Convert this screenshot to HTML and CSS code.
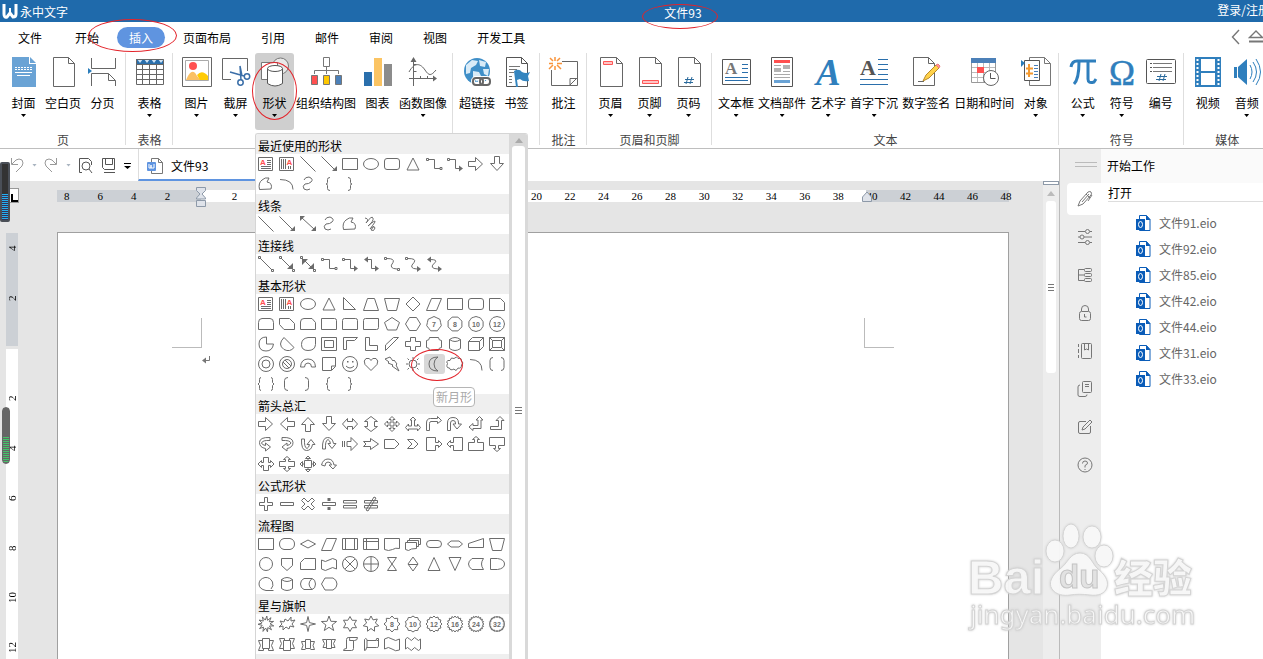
FILE: index.html
```html
<!DOCTYPE html>
<html lang="zh-CN">
<head>
    <meta charset="UTF-8">
    <meta name="viewport" content="width=device-width, initial-scale=1.0">
    <title>文件93 - 永中文字</title>
    <link rel="stylesheet" href="styles.css">
</head>
<body>
    <header class="titlebar">
        <div class="brand">
            <svg width="16" height="18" viewBox="0 0 16 18"><path d="M2 2v10q0 4 3 3l3-4 3 4q3 0 3-3V2" fill="none" stroke="#fff" stroke-width="3"/><path d="M8 6v6" stroke="#fff" stroke-width="2"/></svg>
            <span>永中文字</span>
        </div>
        <h1 class="doc-title">文件93</h1>
        <a class="login" href="#">登录/注册</a>
    </header>

    <nav class="menu">
        <button class="menu-tab menu-file">文件</button>
        <button class="menu-tab">开始</button>
        <button class="menu-tab active"><span>插入</span></button>
        <button class="menu-tab">页面布局</button>
        <button class="menu-tab">引用</button>
        <button class="menu-tab">邮件</button>
        <button class="menu-tab">审阅</button>
        <button class="menu-tab">视图</button>
        <button class="menu-tab">开发工具</button>
        <div class="menu-right">
            <svg width="32" height="16" viewBox="0 0 32 16" fill="none" stroke="#777" stroke-width="1.4"><path d="M8 1L1.500 8 8 15M18.500 8.500L25 2l6.500 6.500z"/><path d="M18 12.500h14" stroke-width="2"/></svg>
        </div>
    </nav>

    <!-- ribbon -->
    <section class="ribbon">
        <div class="group">
            <div class="tools">
                <button class="tool"><svg viewBox="0 0 32 32"><path d="M4 1h17v7h7v23H4z" fill="#6aa3d5"/><path d="M22 1l6 6h-6z" fill="#6aa3d5"/><path d="M7 11.500h17M7 13.500h17" stroke="#fff" stroke-dasharray="2 1"/><path d="M7 16.500h17M9 19.500h13" stroke="#fff"/></svg><span>封面</span><i class="caret"></i></button>
                <button class="tool"><svg viewBox="0 0 32 32" fill="#fff" stroke="#666"><path d="M6.500 1.500h15l6 6v23h-21zM21.500 1.500v6h6"/></svg><span>空白页</span></button>
                <button class="tool"><svg viewBox="0 0 32 32" fill="none" stroke="#666"><path d="M4.500 2v10.500h24V2M4.500 30V17.500h17l7 7V30M21.500 17.500v7h7"/><path d="M1 12l4 3-4 3z" fill="#2b7dbb" stroke="none"/></svg><span>分页</span></button>
            </div>
            <h2 class="group-name">页</h2>
        </div>
        <div class="group">
            <div class="tools">
                <button class="tool"><svg viewBox="0 0 32 32" fill="none" stroke="#666"><path d="M2 3h28v5H2z" fill="#2a6fac" stroke="none"/><path d="M3 3l3 4 3-4zM10 3l3 4 3-4zM17 3l3 4 3-4zM24 3l3 4 3-4z" fill="#cfe3f5" stroke="none"/><path d="M2.500 3.500h27v25h-27zM2.500 8.500h27M2.500 13.500h27M2.500 18.500h27M2.500 23.500h27M8.500 8v20M15.500 8v20M22.500 8v20"/></svg><span>表格</span><i class="caret"></i></button>
            </div>
            <h2 class="group-name">表格</h2>
        </div>
        <div class="group">
            <div class="tools">
                <button class="tool"><svg viewBox="0 0 32 32"><path d="M1.500 1.500h29v29h-29z" fill="#fff" stroke="#666"/><path d="M4.500 4.500h23v20h-23z" fill="#fff" stroke="#aaa"/><circle cx="12" cy="10" r="4" fill="#ff5050"/><path d="M5 24q6-14 11-4l4 4z" fill="#fbc165"/><path d="M16 19q5-6 11 1v4h-8z" fill="#ffcb05"/></svg><span>图片</span><i class="caret"></i></button>
                <button class="tool"><svg viewBox="0 0 32 32" fill="none" stroke="#666"><path d="M11 23.500H2.500v-21h25V15"/><g stroke="#3a6ea8" stroke-width="1.500"><path d="M10 16l14 4M20 10l1 14M20 10l2 10"/><circle cx="27" cy="20.500" r="2.700"/><circle cx="20.500" cy="26.500" r="2.700"/></g></svg><span>截屏</span><i class="caret"></i></button>
                <div class="dropdown-wrap">
                    <button class="tool open"><svg viewBox="0 0 32 32" fill="#fff" stroke="#777"><circle cx="21.500" cy="10" r="8" fill="#e8e8e8"/><path d="M2.500 6.500h16v17h-16z"/><path d="M8.500 12.500v15q7.500 5 15 0v-15" stroke="#555"/><ellipse cx="16" cy="12.500" rx="7.500" ry="3" stroke="#555"/></svg><span>形状</span><i class="caret"></i></button>
                    <div class="shape-menu">
                        <div class="shape-list" id="shape-list"></div>
                        <div class="shape-scroll"><div class="shape-thumb"><i class="grip"></i></div></div>
                    </div>
                </div>
                <button class="tool"><svg viewBox="0 0 32 32" fill="#fff" stroke="#777"><path d="M13.500 1.500h6v9h-6zM16.500 10.500v4M4.500 18v-3.500h24V18M16.500 14v4"/><path d="M1.500 19.500h6v9h-6z" fill="#ff5050"/><path d="M13.500 19.500h6v9h-6z" fill="#ffc800"/><path d="M25.500 19.500h6v9h-6z" fill="#4c80b8"/></svg><span>组织结构图</span></button>
                <button class="tool"><svg viewBox="0 0 32 32"><path d="M2 16h8v14H2z" fill="#2a6fac"/><path d="M12 2h8v28h-8z" fill="#fbc463"/><path d="M22 8h8v22h-8z" fill="#8c8c8c"/></svg><span>图表</span></button>
                <button class="tool"><svg viewBox="0 0 32 32" fill="none" stroke="#666"><path d="M6.500 30V3M2 22.500h26M13.500 20v2M20.500 20v2M6.500 15.500h3M6.500 8.500h3"/><path d="M2 16C8 5 14 8 18 14s6 6 11 0"/><path d="M6.500 1l3 5h-6zM30 22.500l-4-3v6z" fill="#666" stroke="none"/></svg><span>函数图像</span><i class="caret"></i></button>
            </div>
            <h2 class="group-name"></h2>
        </div>
        <div class="group">
            <div class="tools">
                <button class="tool"><svg viewBox="0 0 32 32"><circle cx="16" cy="15" r="13" fill="#3f8fc8"/><path d="M5 9l6-5 6 1-2 4-5 3-1 5-4 1zM18 4l7 2-1 5-5-1zM12 15l6 1 2 4-4 6-4-5zM22 13l6 0-1 7-4-2z" fill="#d9ebf7"/><g fill="none" stroke="#fff" stroke-width="4"><rect x="12" y="22" width="10" height="6" rx="3"/><rect x="19" y="22" width="10" height="6" rx="3"/></g><g fill="none" stroke="#666" stroke-width="2"><rect x="12" y="22" width="10" height="7" rx="3"/><rect x="19" y="22" width="10" height="7" rx="3"/></g></svg><span>超链接</span></button>
                <button class="tool"><svg viewBox="0 0 32 32"><path d="M5.500 1.500h15l6 6v23h-21zM20.500 1.500v6h6" fill="#fff" stroke="#555"/><path d="M8 10.500h11M8 13.500h8M8 16.500h5M8 20.500h3M8 23.500h3M8 26.500h3" stroke="#777"/><path d="M13 15q5-3 8 1 4 2 8 0l-2 4 1 5q-6 1-9-2l-3 1 1 7h-2z" fill="#3485bf"/></svg><span>书签</span></button>
            </div>
            <h2 class="group-name"></h2>
        </div>
        <div class="group">
            <div class="tools">
                <button class="tool"><svg viewBox="0 0 32 32" fill="none" stroke="#666"><path d="M14 5.500h15.500v24h-26V14M22 29.500v-7h7.500M22 29l7-7"/><path d="M7 1v4M7 10v4M1 7.500h4M9 7.500h5M2 2l3 3M9 9l4 4M12 2L9 5M5 9l-4 4" stroke="#f9943b" stroke-width="1.500"/></svg><span>批注</span></button>
            </div>
            <h2 class="group-name">批注</h2>
        </div>
        <div class="group">
            <div class="tools">
                <button class="tool"><svg viewBox="0 0 32 32" fill="#fff" stroke="#666"><path d="M5.500 1.500h16l6 6v23h-22zM21.500 1.500v6h6"/><path d="M8.500 5.500h9v3h-9z" fill="#ffc4c4" stroke="#f55"/></svg><span>页眉</span><i class="caret"></i></button>
                <button class="tool"><svg viewBox="0 0 32 32" fill="#fff" stroke="#666"><path d="M5.500 1.500h16l6 6v23h-22zM21.500 1.500v6h6"/><path d="M8.500 24.500h16v3h-16z" fill="#ffc4c4" stroke="#f55"/></svg><span>页脚</span><i class="caret"></i></button>
                <button class="tool"><svg viewBox="0 0 32 32" fill="#fff" stroke="#666"><path d="M5.500 1.500h16l6 6v23h-22zM21.500 1.500v6h6"/><path d="M15 21l-2 7M19 21l-2 7M12 23.500h9M11 26.500h9" stroke="#2a6a9c"/></svg><span>页码</span><i class="caret"></i></button>
            </div>
            <h2 class="group-name">页眉和页脚</h2>
        </div>
        <div class="group">
            <div class="tools">
                <button class="tool"><svg viewBox="0 0 32 32"><path d="M2.500 3.500h28v25h-28z" fill="#fff" stroke="#555"/><text class="serif-a" x="5" y="18" font-size="17" fill="#777">A</text><path d="M22 8.500h6M22 12.500h6M22 16.500h6M5 21.500h23M5 24.500h23" stroke="#2a6fac"/></svg><span>文本框</span><i class="caret"></i></button>
                <button class="tool"><svg viewBox="0 0 32 32"><path d="M5.500 1.500h21v29h-21z" fill="#fff" stroke="#555"/><path d="M8 4h16v3H8z" fill="#ff5050"/><path d="M8 12h7v4H8zM17 9h7v4h-7z" fill="#b3b3b3"/><path d="M8 9.500h7M17 15.500h7M8 18.500h16M8 21.500h16" stroke="#aaa"/><path d="M8 24h16v3H8z" fill="#6aa3d5"/></svg><span>文档部件</span><i class="caret"></i></button>
                <button class="tool"><svg viewBox="0 0 32 32"><text class="serif-a" x="4" y="29" font-size="37" font-style="italic" fill="#2f7fbd">A</text></svg><span>艺术字</span><i class="caret"></i></button>
                <button class="tool"><svg viewBox="0 0 32 32"><text class="serif-a" x="2" y="19" font-size="22" fill="#555">A</text><path d="M20 3.500h10M20 8.500h10M20 13.500h10M20 18.500h10M2 23.500h28M2 28.500h28" stroke="#2a6fac"/></svg><span>首字下沉</span><i class="caret"></i></button>
                <button class="tool"><svg viewBox="0 0 32 32"><path d="M3.500 1.500h15l6 6v22h-21zM18.500 1.500v6h6" fill="#fff" stroke="#666"/><path d="M8 25.500h6" stroke="#666"/><path d="M13 25l3-6L26 9l3 3-10 10z" fill="#ffd24a" stroke="#b88a2a"/><path d="M26 9l2-1 2 2-1 2z" fill="#f99" stroke="#e77"/></svg><span>数字签名</span></button>
                <button class="tool"><svg viewBox="0 0 32 32"><path d="M3.500 2.500h24v24h-24z" fill="#fff" stroke="#999"/><path d="M3 2h25v5H3z" fill="#4c80b8"/><path d="M9.500 7v19M15.500 7v19M21.500 7v19M4 11.500h23M4 16.500h23M4 21.500h23" stroke="#bbb"/><path d="M9 11h7v6H9z" fill="#ff5050"/><circle cx="23" cy="22" r="7.500" fill="#fff" stroke="#666"/><path d="M22.500 17v5.500h5" fill="none" stroke="#555"/></svg><span>日期和时间</span></button>
                <button class="tool"><svg viewBox="0 0 32 32" fill="#fff" stroke="#777"><path d="M9.500 1.500h15l6 6v22h-21zM24.500 1.500v6h6"/><path d="M4.500 4.500h15v20h-15z" stroke="#555"/><path d="M1 4l4 3-4 4z" fill="#2b7dbb" stroke="none"/><path d="M9 8v13M6 12.500h7M6 17.500h7" stroke="#f59a2f" stroke-width="2"/><path d="M14 9.500h4M14 12.500h4M14 15.500h4M14 18.500h4M14 21.500h4" stroke="#4c80b8"/></svg><span>对象</span><i class="caret"></i></button>
            </div>
            <h2 class="group-name">文本</h2>
        </div>
        <div class="group">
            <div class="tools">
                <button class="tool"><svg viewBox="0 0 32 32" fill="none" stroke="#2f7fbd"><path d="M4 11q1-6 6-6h19" stroke-width="3"/><path d="M12 6q0 17-5 22" stroke-width="3"/><path d="M21 6v17q0 5 6 3l2-3" stroke-width="3"/></svg><span>公式</span><i class="caret"></i></button>
                <button class="tool"><svg viewBox="0 0 32 32"><text x="3" y="29" font-size="35" font-family="Liberation Serif, serif" fill="#2f7fbd" stroke="#2f7fbd" stroke-width=".5">Ω</text></svg><span>符号</span><i class="caret"></i></button>
                <button class="tool"><svg viewBox="0 0 32 32"><rect x="1.500" y="3.500" width="29" height="24" rx="1" fill="#fff" stroke="#555"/><path d="M5 7.500h2M5 11.500h2M5 15.500h2" stroke="#555"/><path d="M8 7.500h19M8 11.500h19M8 15.500h19" stroke="#777"/><path d="M16 18l-2 7M20 18l-2 7M12 20.500h10M11 23.500h10" stroke="#2a6a9c"/></svg><span>编号</span></button>
            </div>
            <h2 class="group-name">符号</h2>
        </div>
        <div class="group">
            <div class="tools">
                <button class="tool"><svg viewBox="0 0 32 32"><path d="M3 1h26v30H3z" fill="#2f7fbd"/><path d="M9 3h14v12H9zM9 17h14v12H9z" fill="#fff"/><path d="M5.500 3v27M26.500 3v27" stroke="#fff" stroke-width="2" stroke-dasharray="2 2"/></svg><span>视频</span></button>
                <button class="tool"><svg viewBox="0 0 32 32"><path d="M3 11h3v11H3zM7 11l9-8v26l-9-8z" fill="#2f7fbd"/><path d="M19 9q4 7 0 14M22 6q7 10 0 20M25 3q9 13 0 26" fill="none" stroke="#2f7fbd"/></svg><span>音频</span><i class="caret"></i></button>
            </div>
            <h2 class="group-name">媒体</h2>
        </div>
    </section>

    <div class="workspace">
        <main class="editor">
            <div class="quickbar">
                <button class="quick"><svg width="14" height="18" viewBox="0 0 14 18" fill="none" stroke="#999"><path d="M1.500 2v6.500H8M2 8l4-4q3-2 6 0 2 3 0 6l-6 6"/></svg></button>
                <i class="caret pale"></i>
                <button class="quick"><svg width="14" height="18" viewBox="0 0 14 18" fill="none" stroke="#999"><path d="M12.500 2v6.500H6M12 8L8 4Q5 2 2 4 0 7 2 10l6 6"/></svg></button>
                <i class="caret pale"></i>
                <button class="quick"><svg width="15" height="18" viewBox="0 0 15 18" fill="none" stroke="#555"><path d="M4 16.500H1.500v-14h9l3 3V9"/><circle cx="8" cy="10" r="4"/><path d="M11 13l3 4"/></svg></button>
                <button class="quick save"><svg width="15" height="18" viewBox="0 0 15 18" fill="none" stroke="#555"><path d="M1.500 2.500h12v11h-10l-2-2zM4.500 2.500v6h7v-6M3 16.500h11"/></svg></button>
                <i class="caret more"></i>
                <div class="doc-tab">
                    <svg width="16" height="18" viewBox="0 0 16 18"><path d="M4.500 1.500h7l4 4v11h-11zM11.500 1.500v4h4" fill="#fff" stroke="#777"/><rect x="0" y="5" width="9" height="9" rx="1" fill="#5f94e0"/><path d="M2 7v4h2V8v3h3V7" stroke="#fff" fill="none"/></svg>
                    <span>文件93</span>
                </div>
            </div>
            <div class="canvas">
                <div class="vruler-col">
                    <span class="tab-stop"></span>
                    <div class="vruler" id="vruler"></div>
                </div>
                <div class="sheet-col">
                    <div class="hruler" id="hruler"></div>
                    <div class="sheet">
                        <i class="crop crop-left"></i>
                        <svg class="para" width="8" height="8" viewBox="0 0 8 8"><path d="M7.500 0v4.500H1" fill="none" stroke="#777"/><path d="M0 4.500l4-3v6z" fill="#777"/></svg>
                        <i class="crop crop-right"></i>
                    </div>
                </div>
                <div class="vscroll">
                    <i class="split"></i>
                    <i class="up"></i>
                    <div class="thumb"><i class="grip"></i></div>
                </div>
            </div>
        </main>
        <aside class="side">
            <div class="side-tabs">
                <i class="side-handle"></i>
                <button class="side-tab active"><svg viewBox="0 0 18 18"><path d="M2 16l2-5L12 2q2-1 3 0 1 2 0 3L7 14zM10 4l4 4M6 12l7-8M16 5l-4 6"/></svg></button>
                <button class="side-tab"><svg viewBox="0 0 18 18"><path d="M2 3.500h7M14 3.500h2M2 9h2M8 9h8M2 14.500h7M14 14.500h2"/><circle cx="11.500" cy="3.500" r="2"/><circle cx="6" cy="9" r="2"/><circle cx="11.500" cy="14.500" r="2"/></svg></button>
                <button class="side-tab"><svg viewBox="0 0 18 18"><path d="M8 3.500H2.500v11H8M2.500 9H8"/><rect x="8.500" y="2.500" width="7" height="3" rx="1"/><rect x="8.500" y="7.500" width="7" height="3" rx="1"/><rect x="8.500" y="12.500" width="7" height="3" rx="1"/></svg></button>
                <button class="side-tab"><svg viewBox="0 0 18 18"><rect x="3.500" y="7.500" width="11" height="9" rx="2"/><path d="M5.500 7V5q0-3.500 3.500-3.500T12.500 5v2M8.500 10v3h2"/></svg></button>
                <button class="side-tab"><svg viewBox="0 0 18 18"><path d="M2.500 2v3M2.500 7v4M2.500 13v3"/><rect x="5.500" y="1.500" width="10" height="15" rx="1"/><path d="M8.500 2v6l2-1 2 1V2"/></svg></button>
                <button class="side-tab"><svg viewBox="0 0 18 18"><rect x="6.500" y="1.500" width="9" height="11" rx="1"/><path d="M9 4.500h4M9 6.500h4M4 5q-2 0-2 2v8q0 1.500 2 1.500h5q2 0 2-2"/></svg></button>
                <button class="side-tab"><svg viewBox="0 0 18 18"><path d="M10 3.500H4q-1.500 0-1.500 1.500v9q0 1.500 1.500 1.500h9q1.500 0 1.500-1.500V8M6 12l1-3 7-7 2 2-7 7z"/></svg></button>
                <button class="side-tab"><svg viewBox="0 0 18 18"><circle cx="9" cy="9" r="7"/><path d="M6.500 7.500q0-2.500 2.500-2.500t2.500 2q0 1.500-2.500 2.500v2M9 13v1"/></svg></button>
            </div>
            <div class="side-panel">
                <h2 class="side-title">开始工作</h2>
                <h3 class="side-sub">打开</h3>
                <ul class="files" id="files"></ul>
            </div>
        </aside>
    </div>

    <div class="tooltip">新月形</div>

    <!-- floating desktop meters -->
    <div class="meter meter-top"></div>
    <div class="meter meter-bottom"></div>

    <!-- red marks -->
    <i class="mark mark-insert"></i>
    <i class="mark mark-title"></i>
    <i class="mark mark-shape"></i>
    <i class="mark mark-moon"></i>

    <svg class="watermark" width="250" height="130" viewBox="0 0 250 130">
        <text x="8" y="74" font-size="49" font-weight="bold" class="wm-latin">Bai</text>
        <ellipse cx="95" cy="31" rx="9" ry="11"/>
        <ellipse cx="111" cy="16" rx="8" ry="12"/>
        <ellipse cx="132" cy="17" rx="9" ry="11"/>
        <ellipse cx="144" cy="36" rx="9" ry="11"/>
        <path d="M120 33c-10 0-12 10-20 16s-12 14-8 20 12 7 18 6 12-1 20 0 15-1 17-8-3-13-9-18-8-16-18-16z"/>
        <text x="99" y="68" font-size="33" font-weight="bold" class="wm-latin wm-du">du</text>
        <text x="154" y="72" font-size="39" font-weight="900" class="wm-cjk">经验</text>
        <text x="10" y="104" font-size="26" class="wm-url">jingyan.baidu.com</text>
    </svg>

    <script src="shapes.js"></script>
</body>
</html>
```
FILE: styles.css
```css
* {
    box-sizing: border-box;
}
body {
    margin: 0;
    height: 100vh;
    display: flex;
    flex-direction: column;
    overflow: hidden;
    position: relative;
    background: #fff;
    color: #000;
    font-family: "Noto Sans CJK SC", sans-serif;
    font-size: 12px;
    line-height: 16px;
}
h1, h2, h3, ul {
    margin: 0;
    padding: 0;
    font-size: 12px;
    font-weight: normal;
    list-style: none;
}
button {
    border: none;
    background: none;
    padding: 0;
    color: inherit;
    font: inherit;
    cursor: pointer;
}
svg, i {
    display: block;
    flex: none;
}

/* title bar */
.titlebar {
    display: grid;
    grid-template-columns: 52.6% 1fr auto;
    align-items: center;
    height: 22px;
    flex: none;
    background: #1f6aab;
    color: #fff;
}
.brand {
    display: flex;
    align-items: center;
    gap: 2px;
    padding-left: 2px;
}
.brand span {
    padding-top: 2px;
}
.doc-title {
    padding-top: 3px;
}
.login {
    color: #fff;
    text-decoration: none;
    white-space: nowrap;
    margin-right: -7px;
    padding-bottom: 2px;
}

/* menu tabs */
.menu {
    display: flex;
    align-items: center;
    height: 30px;
    flex: none;
    padding-left: 3px;
}
.menu-tab {
    padding: 1px 15px 0;
    height: 30px;
    white-space: nowrap;
}
.menu-file {
    margin-right: 3px;
}
.menu-tab.active {
    padding: 0 3px;
}
.menu-tab.active span {
    display: block;
    padding: 3px 12px 2px;
    border-radius: 11px;
    background: #5f94e0;
    color: #fff;
}
.menu-right {
    margin-left: auto;
}

/* ribbon */
.ribbon {
    display: flex;
    height: 97px;
    flex: none;
    border-bottom: 1px solid #bebebe;
    position: relative;
    z-index: 2;
}
.group {
    flex: none;
    padding: 0 3px 0 4px;
    position: relative;
    border-right: 1px solid #dedede;
    height: 92px;
    margin-top: 1px;
    display: flex;
    flex-direction: column;
    justify-content: space-between;
}
.tools {
    display: flex;
}
.tool {
    display: flex;
    flex-direction: column;
    align-items: center;
    min-width: 39px;
    height: 77px;
    padding: 3px 2px 0;
    border-radius: 3px;
    white-space: nowrap;
}
.tool svg {
    width: 32px;
    height: 32px;
    margin-bottom: 7px;
    overflow: visible;
}
.tool.open {
    background: #cfcfcf;
}
.caret {
    width: 5px;
    height: 3px;
    margin-top: 3px;
    background: #000;
    clip-path: polygon(0 0, 100% 0, 50% 100%);
}
.group-name {
    text-align: center;
    color: #444;
    height: 13px;
}
.serif-a {
    font-family: "Liberation Serif", serif;
    font-weight: bold;
}

/* shapes drop-down */
.dropdown-wrap {
    position: relative;
}
.shape-menu {
    position: absolute;
    top: 80px;
    left: 0;
    display: flex;
    width: 273px;
    height: calc(100vh - 133px);
    overflow: hidden;
    background: #fff;
    border-top: 1px solid #d5d5d5;
    border-left: 1px solid #d5d5d5;
    border-radius: 3px 3px 0 0;
}
.shape-list {
    width: 253px;
    flex: none;
}
.shape-head {
    height: 20px;
    padding: 4px 2px 0;
    background: #efefef;
}
.shape-grid {
    display: grid;
    grid-template-columns: repeat(12, 21px);
}
.shape {
    width: 21px;
    height: 20px;
    border-radius: 3px;
}
.shape svg {
    fill: none;
    stroke: #6c6c6c;
}
.shape text {
    fill: #6c6c6c;
    stroke: none;
    font-family: "Liberation Sans", sans-serif;
    font-weight: bold;
    font-size: 7px;
    text-anchor: middle;
}
.shape .red {
    fill: #ff5050;
    font-size: 8px;
}
.shape .solid {
    fill: #6c6c6c;
    stroke: none;
}
.shape.selected {
    background: #d8d8d8;
}
.shape-scroll {
    flex: 1;
    padding: 12px 3px 0;
    background: #d9d9d9;
    position: relative;
}
.shape-scroll::before {
    content: "";
    position: absolute;
    top: 4px;
    left: 6px;
    width: 8px;
    height: 5px;
    background: #aaa;
    clip-path: polygon(50% 0, 100% 100%, 0 100%);
}
.shape-thumb {
    height: 100%;
    padding-top: 16px;
    background: #fff;
    border-radius: 3px 3px 0 0;
    display: flex;
    justify-content: center;
    align-items: center;
}
.grip {
    width: 7px;
    height: 7px;
    border-top: 1px solid #777;
    border-bottom: 1px solid #777;
    background: linear-gradient(#777, #777) center / 7px 1px no-repeat;
}
.tooltip {
    position: absolute;
    z-index: 3;
    left: 433px;
    top: 387px;
    padding: 1px 2px;
    border: 1px solid #b5b5b5;
    border-radius: 4px;
    background: #fff;
    color: #aaa;
}

/* editor */
.workspace {
    flex: 1;
    display: flex;
    min-height: 0;
}
.editor {
    flex: 1;
    display: flex;
    flex-direction: column;
    min-width: 0;
}
.quickbar {
    display: flex;
    align-items: center;
    height: 32px;
    flex: none;
    padding-left: 10px;
}
.quickbar .caret {
    margin: 0 7px 0 8px;
}
.quickbar .caret.pale {
    background: #a9b4c0;
}
.quickbar .save {
    margin-left: 8px;
}
.quickbar .caret.more {
    width: 7px;
    height: 6px;
    margin: 2px 7px 0 8px;
    clip-path: polygon(0 0, 100% 0, 100% 17%, 0 17%, 0 50%, 100% 50%, 50% 100%, 0 50%);
}
.doc-tab {
    display: flex;
    align-items: center;
    gap: 8px;
    width: 200px;
    height: 32px;
    padding: 3px 8px 0;
    border-left: 1px solid #ddd;
    border-bottom: 2px solid #5f94e0;
}
.canvas {
    flex: 1;
    display: flex;
    min-height: 0;
    background: #e5e5e5;
}
.vruler-col {
    width: 57px;
    flex: none;
    display: flex;
    flex-direction: column;
}
.tab-stop {
    width: 13px;
    height: 15px;
    margin: 7px 0 0 6px;
    border: 1px solid #999;
    background: #fff;
    flex: none;
}
.tab-stop::after {
    content: "";
    display: block;
    width: 5px;
    height: 6px;
    margin: 5px 0 0 4px;
    border-left: 2px solid #000;
    border-bottom: 2px solid #000;
}
.vruler {
    width: 12px;
    flex: 1;
    min-height: 0;
    margin: 30px 0 0 6px;
    background: linear-gradient(#ccd0d5 113px, #e5e5e5 113px, #e5e5e5 116px, #fff 116px);
    overflow: hidden;
    display: flex;
    flex-direction: column;
    align-items: center;
    font-family: "Liberation Serif", serif;
    font-size: 11px;
}
.vruler span {
    height: 50px;
    flex: none;
    writing-mode: vertical-rl;
    transform: rotate(180deg);
    text-align: center;
    line-height: 12px;
}
.vruler span:first-child {
    margin-top: -10px;
}
.sheet-col {
    flex: 1;
    display: flex;
    flex-direction: column;
    min-width: 0;
}
.hruler {
    display: flex;
    height: 12px;
    margin: 9px 34px 0 0;
    flex: none;
    position: relative;
    background: linear-gradient(90deg, #ccd0d5 144px, #fff 144px, #fff calc(100% - 143px), #ccd0d5 calc(100% - 143px));
    font-family: "Liberation Serif", serif;
    font-size: 11px;
    line-height: 12px;
}
.hruler-nums {
    flex: 1;
    display: flex;
    margin: 0 -14px 0 -7px;
}
.hruler-nums span {
    flex: 1 1 0;
    text-align: center;
}
.indent {
    position: absolute;
    top: -3px;
    left: 139px;
}
.indent-right {
    top: 1px;
    left: auto;
    right: 137px;
}
.sheet {
    flex: 1;
    margin: 30px 34px 0 0;
    border: 1px solid #a0a0a0;
    border-bottom: none;
    background: #fff;
    display: grid;
    grid-template-columns: 144px 1fr 144px;
    align-content: start;
    padding-top: 85px;
}
.crop {
    width: 30px;
    height: 30px;
    border-bottom: 1px solid #bbb;
}
.crop-left {
    border-right: 1px solid #bbb;
    justify-self: end;
}
.crop-right {
    border-left: 1px solid #bbb;
}
.para {
    margin: 38px 0 0;
}
.vscroll {
    width: 16px;
    flex: none;
    background: #ededed;
    display: flex;
    flex-direction: column;
    align-items: center;
}
.split {
    width: 16px;
    height: 4px;
    border: 1px solid #8d99a8;
    background: #fff;
}
.up {
    width: 8px;
    height: 5px;
    margin: 6px 0 5px;
    background: #bbb;
    clip-path: polygon(50% 0, 100% 100%, 0 100%);
}
.thumb {
    width: 10px;
    height: 172px;
    border-radius: 3px;
    background: #fff;
    display: flex;
    justify-content: center;
    align-items: center;
}
.thumb .grip {
    width: 6px;
}

/* side panel */
.side {
    display: flex;
    width: 204px;
    flex: none;
    border-left: 1px solid #bbb;
}
.side-tabs {
    width: 41px;
    flex: none;
    padding-left: 7px;
    background: #ededed;
}
.side-handle {
    width: 22px;
    height: 5px;
    margin: 13px 0 16px 8px;
    border-top: 1px solid #bbb;
    border-bottom: 1px solid #bbb;
}
.side-tab {
    display: flex;
    justify-content: center;
    align-items: center;
    width: 34px;
    height: 32px;
    margin-bottom: 6px;
    padding-left: 2px;
    border-radius: 4px 0 0 4px;
}
.side-tab.active {
    background: #fff;
}
.side-tab svg {
    width: 18px;
    height: 18px;
    fill: none;
    stroke: #777;
}
.side-panel {
    flex: 1;
}
.side-title {
    height: 34px;
    padding: 9px 6px 0;
    background: #fafafa;
}
.side-sub {
    height: 19px;
    margin-left: 7px;
    padding-top: 2px;
    border-bottom: 1px solid #ddd;
}
.files {
    padding: 8px 0 0 35px;
}
.files a {
    display: flex;
    align-items: center;
    gap: 8px;
    height: 26px;
    color: #666;
    text-decoration: none;
}

/* overlays */
.meter {
    position: absolute;
    z-index: 3;
    left: 0;
    width: 10px;
}
.meter-top {
    top: 162px;
    height: 60px;
    border: 2px solid #4a4f57;
    border-radius: 2px;
    background: linear-gradient(#333 30px, transparent 30px), repeating-linear-gradient(#25b0f0 0 1px, #335 1px 2px);
}
.meter-bottom {
    left: 2px;
    top: 407px;
    width: 8px;
    height: 57px;
    border-radius: 4px;
    border: 1px solid #666;
    background: linear-gradient(#666 29px, transparent 29px), repeating-linear-gradient(#666 0 1px, #45c46a 1px 2px);
}
.mark {
    position: absolute;
    z-index: 4;
    border: 1px solid #e3242b;
    border-radius: 50%;
}
.mark-insert {
    left: 88px;
    top: 19px;
    width: 89px;
    height: 33px;
}
.mark-title {
    left: 642px;
    top: 4px;
    width: 76px;
    height: 25px;
}
.mark-shape {
    left: 252px;
    top: 62px;
    width: 45px;
    height: 58px;
}
.mark-moon {
    left: 411px;
    top: 349px;
    width: 52px;
    height: 32px;
}
.watermark {
    position: absolute;
    z-index: 5;
    left: 960px;
    top: 520px;
    fill: #fff;
    fill-opacity: 0.8;
    stroke: #d4d4d4;
    filter: drop-shadow(0 0 1px #ccc);
}
.wm-latin {
    font-family: "Liberation Sans", sans-serif;
}
.wm-du {
    fill: #ddd;
    stroke: #c4c4c4;
}
.wm-cjk {
    font-family: "Noto Sans CJK SC", sans-serif;
}
.wm-url {
    font-family: "Noto Sans", sans-serif;
}
```
FILE: shapes.js
```javascript
// helpers, every icon is drawn in a 21x20 cell around (10, 10)
function poly(n, r, turn) {
    return star(n, r, r * Math.cos(Math.PI / n), turn);
}
function star(n, R, r, turn) {
    let d = '';
    for (let i = 0; i < n * 2; i++) {
        let a = Math.PI * i / n - Math.PI / 2 + (turn || 0);
        let q = i % 2 ? r : R;
        d += (i ? 'L' : 'M') + (10 + q * Math.cos(a)).toFixed(1) + ' ' + (10 + q * Math.sin(a)).toFixed(1);
    }
    return d + 'z';
}
function circle(r, x, y) {
    x = x || 10;
    y = y || 10;
    return `M${x - r} ${y}a${r} ${r} 0 1 0 ${2 * r} 0a${r} ${r} 0 1 0 ${-2 * r} 0z`;
}
function num(d, t) {
    return `<path d="${d}"/><text x="10" y="12.500">${t}</text>`;
}
const HEAD = 'M18 17v-5l-5 5z';
const HEAD2 = 'M2 2v5l5-5z';

// outline path, optional filled path after "|", or raw svg
const shapes = {
    textH: '<path d="M2.500 3.500h14v13h-14zM11 6.500h4M11 8.500h4M11 10.500h4M5 12.500h10M5 14.500h10" /><text class="red" x="7" y="11">A</text>',
    textV: '<path d="M2.500 3.500h14v13h-14zM4.500 5v10M6.500 5v10M8.500 5v10M11.500 12v3M13.500 12v3" /><text class="red" x="12.500" y="11">A</text>',
    line: 'M2.500 2.500l15 15',
    arrow: 'M2.500 2.500l13 13|' + HEAD,
    doubleArrow: 'M4 4l12 11|' + HEAD + HEAD2,
    rect: 'M2.500 4.500h15v11h-15z',
    oval: 'M2.500 10a7.500 5.500 0 1 0 15 0a7.500 5.500 0 1 0-15 0z',
    roundRect: 'M5 4.500h10q2.500 0 2.500 2.500v6q0 2.500-2.500 2.500H5q-2.500 0-2.500-2.500V7q0-2.500 2.500-2.500z',
    triangle: 'M10 4l6 12H4z',
    elbow: 'M5 5.500h5.500v9H16M2.500 4.500h2v2h-2zM16 13.500h2v2h-2z',
    elbowArrow: 'M5 5.500h5.500v9H15M2.500 4.500h2v2h-2z|M18 14.500l-4-3v6z',
    elbowDouble: 'M5 5.500h5.500v9H15|M3 5.500l4-3v6zM18 14.500l-4-3v6z',
    right: 'M2.500 7.500h7v-4l7 6.500-7 6.500v-4h-7z',
    left: 'M17.500 7.500h-7v-4L3.500 10l7 6.500v-4h7z',
    up: 'M7.500 17.500v-7h-4L10 3.500l6.500 7h-4v7z',
    down: 'M7.500 2.500v7h-4l6.500 7 6.500-7h-4v-7z',
    freeform: 'M3.500 15.500Q2 9 6 6q3-3 7-2l-2 4q6 1 4 7z',
    arc: 'M3 5.500q13 0 13 10',
    curve: 'M6 6q1-3 5-3 5 2 2 5-2 2-6 2-3 2-1 5 3 2 6 0',
    scribble: 'M4 4q5 1 1 5 6-8 7-5 1 3-5 8 8-7 7-4-2 3-5 7 4-4 5-1-1 4-4 2l3-4',
    braceL: 'M11 3.500q-2.500 0-2.500 2v3q0 1.500-1.500 1.500 1.500 0 1.500 1.500v3q0 2 2.500 2',
    braceR: 'M8 3.500q2.500 0 2.500 2v3q0 1.500 1.500 1.500-1.500 0-1.500 1.500v3q0 2-2.500 2',
    conn: 'M4 4l12 12M2.500 2.500h2v2h-2zM15.500 15.500h2v2h-2z',
    connArrow: 'M4 4l10 10M2.500 2.500h2v2h-2zM15.500 15.500h2v2h-2z|M16 15v-6l-6 6z',
    connDouble: 'M4 4l12 12M2.500 2.500h2v2h-2zM15.500 15.500h2v2h-2z|M16 15v-6l-6 6zM4 5v6l6-6z',
    curved: 'M5 4.500q8 0 6 4-5 6 4 6.500M2.500 3.500h2v2h-2zM15.500 14.500h2v2h-2z',
    curvedArrow: 'M5 4.500q9 0 6 4-6 6 3 6.500M2.500 3.500h2v2h-2z|M18 15l-4-3v6z',
    curvedDouble: 'M6 5.500q8 0 5 3-7 6 3 6.500|M3 5.500l4-3v6zM18 15l-4-3v6z',
    rightTriangle: 'M3.500 3.500v12h12z',
    trapezoid: 'M6.500 4.500h7l4 12h-15z',
    trapInv: 'M2.500 4.500h15l-3 12h-9z',
    diamond: 'M10 3l7 7-7 7-7-7z',
    parallelogram: 'M7.500 4.500h10l-5 12h-10z',
    snip1: 'M2.500 4.500h11l4 4v8h-15z',
    snipTop: 'M6 4.500h8q3.500 0 3.500 4v7h-15v-7q0-4 3.500-4z',
    snipDiag: 'M2.500 4.500h10l5 5v6H7l-4.500-5z',
    snipRound: 'M6 4.500h8l3.500 4v7h-15V8q0-3.500 3.500-3.500z',
    round1: 'M2.500 4.500h13q2 0 2 2v9h-15z',
    roundTop: 'M4.500 4.500h11q2 0 2 2v9h-15v-9q0-2 2-2z',
    roundDiag: 'M4.500 4.500h13v9q0 2-2 2h-13v-9q0-2 2-2z',
    pentagon: 'M10 3.500l7.500 5-3 7.500h-9l-3-7.500z',
    hexagon: 'M6.500 3.500h7l4 6.500-4 6.500h-7L2.500 10z',
    n7: num(poly(7, 7.5), '7'),
    n8: num(poly(8, 7.5, 0.39), '8'),
    n10: num(poly(10, 7.5), '10'),
    n12: num(poly(12, 7.5), '12'),
    pie: 'M10.500 3v7h7q-1 7-7.500 7Q3 17 3 10t7.500-7z',
    chord: 'M7 3.500l10 10q-4 5-10 2-7-5-0-12z',
    teardrop: 'M17.500 3.500H10q-6.500 1-6.500 7t6.500 6q7 0 7.500-6z',
    frame: 'M2.500 3.500h15v13h-15zM5.500 6.500h9v7h-9z',
    halfFrame: 'M3.500 3.500h14l-3 3h-8v9h-3z',
    lShape: 'M4.500 3.500h4v8h8v5h-12z',
    diagStripe: 'M3.500 11l8-7.500h5l-13 13z',
    cross: 'M7.500 3.500h5v4h5v5h-5v4h-5v-4h-5v-5h5z',
    plaque: 'M5.500 3.500h9q0 3 3 3v7q-3 0-3 3h-9q0-3-3-3v-7q3 0 3-3z',
    can: 'M4.500 5.500v9q5.500 4 11 0v-9M4.500 5.500q5.500-4 11 0-5.500 4-11 0z',
    cube: 'M2.500 7.500h11v9h-11zM2.500 7.500l4-4h11l-4 4M17.500 3.500v9l-4 4',
    bevel: 'M2.500 3.500h15v13h-15zM5.500 6.500h9v7h-9zM2.500 3.500l3 3M17.500 3.500l-3 3M2.500 16.500l3-3M17.500 16.500l-3-3',
    donut: circle(7.5) + circle(4),
    noSymbol: circle(7.5) + circle(4.5) + 'M6 8l6 6M8 6l6 6',
    blockArc: 'M2.500 13Q3 5 10 5t7.500 8h-4q0-4-3.500-4t-3.500 4z',
    folded: 'M3.500 3.500h13v9l-4 4h-9zM12.500 16v-4h4',
    smiley: circle(7.5) + 'M6 12q4 4 8 0|M7 7h1.500v1.500H7zM12 7h1.500v1.500H12z',
    heart: 'M10 16.500l-6-6q-2-4 1-6 4-1 5 2 1-3 5-2 3 2 1 6z',
    lightning: 'M3 5l5-2 3 4 1-1 3 4-1 1 3 6-7-5 1-1-5-2 1-1z',
    sun: circle(4) + 'M10 3v2M10 15v2M3 10h2M15 10h2M4.500 4.500L6 6M14 14l1.500 1.500M15.500 4.500L14 6M6 14l-1.500 1.500',
    moon: 'M14 3Q5 3 5 10t9 7q-4-2-4-7t4-7z',
    cloud: 'M5 6.500q1-4 4-2 3-3 4 0 4-1 3.500 2.500 3 2 0 4 0 4-3.500 3-2 4-4 1-4 2-4.500-1-4 0-2-4.500-2-2 .500-3z',
    arcSmall: 'M4 5.500q12 0 12 11',
    bracketPair: 'M6 3.500q-3 0-3 3v7q0 3 3 3M14 3.500q3 0 3 3v7q0 3-3 3',
    bracePair: 'M5 3.500q-1.500 0-1.500 2v3L2 10l1.500 1.500v3q0 2 1.500 2M15 3.500q1.500 0 1.500 2v3L18 10l-1.500 1.500v3q0 2-1.500 2',
    bracketL: 'M11 3.500q-3.500 0-3.500 3v7q0 3 3.500 3',
    bracketR: 'M7 3.500q3.500 0 3.500 3v7q0 3-3.500 3',
    leftRight: 'M2.500 10l5-5.500v3h5v-3l5 5.500-5 5.500v-3h-5v3z',
    upDown: 'M10 2.500l6.500 5h-3v5h3l-6.500 5-6.500-5h3v-5h-3z',
    quad: 'M10 2.500l3 3h-2v3.500h3.500V7l3 3-3 3v-2H11v3.500h2l-3 3-3-3h2V11H5.500v2l-3-3 3-3v2H9V5.500H7z',
    leftRightUp: 'M10 3l3 3h-1.500v6h3v-2l3 3.500-3 3.500v-2h-9v2l-3-3.500 3-3.500v2h3V6H7z',
    bent: 'M2.500 16.500V9q0-4.500 4-4.500h7v-2l4 4-4 3v-2H7q-1.500 0-1.500 2v7z',
    uturn: 'M2.500 16.500V9q0-5.500 5.500-5.500T13.500 9v1h3L12 15l-4-5h2.500V9q0-2.500-2.500-2.500T5.500 9v7.500z',
    leftUp: 'M3 13l4-3.500v2h5V6h-2l3.500-3.500L17 6h-2v8.500H7v2z',
    bentUp: 'M3.500 12.500h8v-6H9l4-4 4 4h-2.500v9h-11z',
    curvedRight: 'M14 3.500Q3.500 3 3.500 8.500q0 5 6 6v2.500l5-4-5-4v2.500Q6 11 5.500 9q1-3 8.500-2.500z',
    curvedLeft: 'M5 3.500q11-.500 11 5 0 5-6 6v2.500l-5-4 5-4v2.500q3-.500 4-2.500-1-3-9-2.500z',
    curvedUp: 'M3.500 5Q3 16.500 8.500 16.500q5 0 6-6H17l-4-5-4 5h2.500q-.500 3-2.500 4-3-1-2.500-9.500z',
    curvedDown: 'M3.500 15Q3 3.500 8.500 3.500q5 0 6 6H17l-4 5-4-5h2.500q-.500-3-2.500-4-3 1-2.500 9.500z',
    striped: 'M2.500 7v6M4.500 7v6M7 7.500h4v-4l6.500 6.500-6.500 6.500v-4H7z',
    notched: 'M2.500 7.500h7v-3l8 5.500-8 5.500v-3h-7L5 10z',
    pentArrow: 'M2.500 5.500h10L17 10l-4.500 4.500h-10z',
    chevron: 'M4.500 5.500h6L15 10l-4.500 4.500h-6L9 10z',
    rightCall: 'M2.500 3.500h9v5h3v-2l3.500 3.500-3.500 3.500v-2h-3v5h-9z',
    leftCall: 'M17.500 3.500h-9v5h-3v-2L2 10l3.500 3.500v-2h3v5h9z',
    upCall: 'M2.500 16.500v-8h6v-3h-2l3.500-3 3.500 3h-2v3h6v8z',
    downCall: 'M2.500 3.500v8h6v3h-2l3.500 3 3.500-3h-2v-3h6v-8z',
    lrCall: 'M7.500 3.500h5v5h2v-2L18 10l-3.500 3.500v-2h-2v5h-5v-5h-2v2L2 10l3.500-3.500v2h2z',
    udCall: 'M2.500 7.500h6v-2h-2l3.500-3 3.500 3h-2v2h6v5h-6v2h2l-3.500 3-3.500-3h2v-2h-6z',
    quadCall: 'M6.500 6.500h7v7h-7zM10 2l2.500 2.500h-5zM10 18l2.500-2.500h-5zM2 10l2.500-2.500v5zM18 10l-2.500-2.500v5zM10 4v2M10 14v2M4 10h2M14 10h2',
    circular: 'M2.500 11Q4 5 9 5t6 6h2.500L14 15l-4-4h2.500Q12 8 9 8t-3 4z',
    plus: 'M8.500 3.500h3v5h5v3h-5v5h-3v-5h-5v-3h5z',
    minus: 'M3.500 8.500h13v3h-13z',
    times: 'M6 4l4 4 4-4 2.500 2.500L13 10l3.500 3.500L14 16l-4-4-4 4-2.500-2.500L7 10 3.500 6.500z',
    divide: 'M3.500 8.500h13v3h-13z|M8.500 4h3v3h-3zM8.500 13h3v3h-3z',
    equal: 'M3.500 6.500h13v2.500h-13zM3.500 11.500h13V14h-13z',
    notEqual: 'M3.500 6.500h13v2.500h-13zM3.500 11.500h13V14h-13zM13 3l2 1-8 13-2-1z',
    terminator: 'M7 4.500h6q4.500 1 4.500 5.500t-4.500 5.500H7Q2.500 14.500 2.500 10T7 4.500z',
    decision: 'M2.500 10L10 6l7.500 4-7.500 4z',
    predefined: 'M2.500 4.500h15v11h-15zM5.500 5v10M14.500 5v10',
    internal: 'M2.500 4.500h15v11h-15zM5.500 5v10M3 7.500h14',
    document: 'M2.500 4.500h15v10q-4-1-7 1-4 2-8 0z',
    multidoc: 'M2.500 8.500h11v6q-6 0-8 2l-3-1zM4.500 8V6.500h11v6h-2M6.500 6V4.500h11v6h-2',
    stadium: 'M6 6.500h8q3.500 0 3.500 3.500T14 13.500H6Q2.500 13.500 2.500 10T6 6.500z',
    prep: 'M6 7h8l3.500 3-3.500 3H6l-3.500-3z',
    manualInput: 'M2.500 9.500l15-5v9h-15z',
    circle: circle(6.5),
    offpage: 'M4.500 4.500h11v7l-5.500 5-5.500-5z',
    card: 'M6.500 4.500h11v11h-15v-7z',
    tape: 'M2.500 6q4 3 7.500 0t7.500 0v9q-4-3-7.500 0t-7.500 0z',
    junction: circle(7.5) + 'M5 5l10 10M15 5L5 15',
    or: circle(7.5) + 'M10 3v14M3 10h14',
    collate: 'M5.500 3.500h9l-9 13h9z',
    sort: 'M10 3l5 7-5 7-5-7zM5 10.500h10',
    extract: 'M10 3.500l6 13H4z',
    merge: 'M4 3.500h12l-6 13z',
    stored: 'M6 4.500h11.500q-4 5.500 0 11H6q-7-5.500 0-11z',
    delay: 'M3.500 4.500h7q7 1 7 5.500t-7 5.500h-7z',
    seq: 'M10 16.500h7.500M15 15q3-3 1.500-7Q14 3 9 3.500 3 5 3 10t7 6.500',
    direct: 'M6 4.500h8q3.500 1 3.500 5.500T14 15.500H6Q2.500 14 2.500 10T6 4.500zM14 4.500q-6 5.500 0 11',
    display: 'M6 4h8q4 2 4 6t-4 6H6L2.500 10z',
    burst1: star(11, 8, 4, 0.1),
    burst2: 'M3 7l4 1 1-3 3 2 3-4v4l4-1-3 4 2 3-4-1-1 3-3-2-3 3v-4l-4 1 3-3z',
    star4: star(4, 7.5, 2),
    star5: star(5, 8, 3.3),
    star6: star(6, 7.5, 4.3),
    star7: star(7, 8, 4.5),
    s8: num(star(8, 8, 6), '8'),
    s10: num(star(10, 8, 6.8), '10'),
    s12: num(star(12, 8, 6.5), '12'),
    s16: num(star(16, 8, 6.5), '16'),
    s24: num(star(20, 8, 6.5), '24'),
    s32: num(star(24, 8, 6.5), '32'),
    ribbonUp: 'M6.500 4.500h7v10h-7zM6 6.500H2.500l2 5-2 5h5v-2M14 6.500h3.500l-2 5 2 5h-5v-2',
    ribbonDown: 'M6.500 6.500h7v10h-7zM6 14.500H2.500l2-5-2-5h5v2M14 14.500h3.500l-2-5 2-5h-5v2',
    ribbonUp2: 'M7.500 5.500h5v9h-5zM7 7.500H3.500l1.500 4-1.500 4h4M13 7.500h3.500l-1.500 4 1.500 4h-4',
    ribbonDown2: 'M7.500 5.500h5v9h-5zM7 13.500H4l1.500-4-2-4h4M13 13.500h3l-1.500-4 2-4h-4',
    scrollV: 'M6.500 14.500v-9q0-2 2-2h9q0 3-3 3h-1v8q0 2-2 2h-8q0-2 3-2zM8.500 3.500q2 1 1 3h4',
    scrollH: 'M3.500 5.500q1-2 2.500 0v1h9q0-3 2.500-2v8q0 1-2 1h-10q0 3-2 3zM6 6.500v7M15.500 6.500h2',
    wave: 'M2.500 5q4-3 7.500 0t7.500 0v11q-4 2-7.500-1t-7.500 0z',
    doubleWave: 'M2.500 5q2-3 4 0t3.500 0 3.500 0 4 0v10q-2 3-4 0t-3.500 0-3.500 0-4 0z'
};

const sections = [
    ['最近使用的形状', 'textH textV line arrow rect oval roundRect triangle elbow elbowArrow right down freeform arc curve braceL braceR'],
    ['线条', 'line arrow doubleArrow curve freeform scribble'],
    ['连接线', 'conn connArrow connDouble elbow elbowArrow elbowDouble curved curvedArrow curvedDouble'],
    ['基本形状', 'textH textV oval triangle rightTriangle trapezoid trapInv diamond parallelogram rect roundRect snip1 snipTop snipDiag snipRound round1 roundTop roundDiag pentagon hexagon n7 n8 n10 n12 pie chord teardrop frame halfFrame lShape diagStripe cross plaque can cube bevel donut noSymbol blockArc folded smiley heart lightning sun moon cloud arcSmall bracketPair bracePair bracketL bracketR braceL braceR'],
    ['箭头总汇', 'right left up down leftRight upDown quad leftRightUp bent uturn leftUp bentUp curvedRight curvedLeft curvedUp curvedDown striped notched pentArrow chevron rightCall leftCall upCall downCall lrCall udCall quadCall circular'],
    ['公式形状', 'plus minus times divide equal notEqual'],
    ['流程图', 'rect terminator decision parallelogram predefined internal document multidoc stadium prep manualInput trapInv circle offpage card tape junction or collate sort extract merge stored delay seq can direct display'],
    ['星与旗帜', 'burst1 burst2 star4 star5 star6 star7 s8 s10 s12 s16 s24 s32 ribbonUp ribbonDown ribbonUp2 ribbonDown2 scrollV scrollH wave doubleWave'],
    ['', '']
];

function shapeIcon(name) {
    let s = shapes[name];
    if (s[0] !== '<') {
        let p = s.split('|');
        s = `<path d="${p[0]}"/>` + (p[1] ? `<path class="solid" d="${p[1]}"/>` : '');
    }
    return `<svg width="21" height="20" viewBox="0 0 21 20">${s}</svg>`;
}

document.getElementById('shape-list').innerHTML = sections.map(([title, names]) =>
    `<h3 class="shape-head">${title}</h3><div class="shape-grid">` +
    names.split(' ').filter(Boolean).map(n =>
        `<button class="shape${n === 'moon' ? ' selected' : ''}" aria-label="${n}">${shapeIcon(n)}</button>`
    ).join('') + '</div>'
).join('');

// rulers
const indent = '<svg class="indent" width="10" height="20" viewBox="0 0 10 20" fill="#dfe3ea" stroke="#8d99a8"><path d="M.5.5h9v3L6 7l3.500 4v1h-9v-1L4 7 .5 3.500zM.5 13.500h9v6h-9z"/></svg>';
const indentRight = '<svg class="indent indent-right" width="10" height="11" viewBox="0 0 10 11" fill="#dfe3ea" stroke="#8d99a8"><path d="M5 1l4.500 5v4.500h-9V6z"/></svg>';
let h = '';
for (let i = -8; i <= 48; i += 2) {
    h += `<span>${Math.abs(i) || ''}</span>`;
}
document.getElementById('hruler').innerHTML = `<div class="hruler-nums">${h}</div>` + indent + indentRight;
document.getElementById('vruler').innerHTML = [4, 2, '', 2, 4, 6, 8, 10, 12].map(n => `<span>${n}</span>`).join('');

// recent files
document.getElementById('files').innerHTML = [91, 92, 85, 42, 44, 31, 33].map(n =>
    `<li><a href="#"><svg width="15" height="16" viewBox="0 0 15 16"><path d="M3.500.5h7l3.500 4v11H3.500z" fill="#fff" stroke="#0a5cb8"/><path d="M10 0l4.500 5H10z" fill="#0a5cb8"/><path d="M0 4h9v11H0z" fill="#0a5cb8"/><ellipse cx="4.500" cy="9.500" rx="2" ry="3" fill="none" stroke="#fff"/></svg>文件${n}.eio</a></li>`
).join('');
```
